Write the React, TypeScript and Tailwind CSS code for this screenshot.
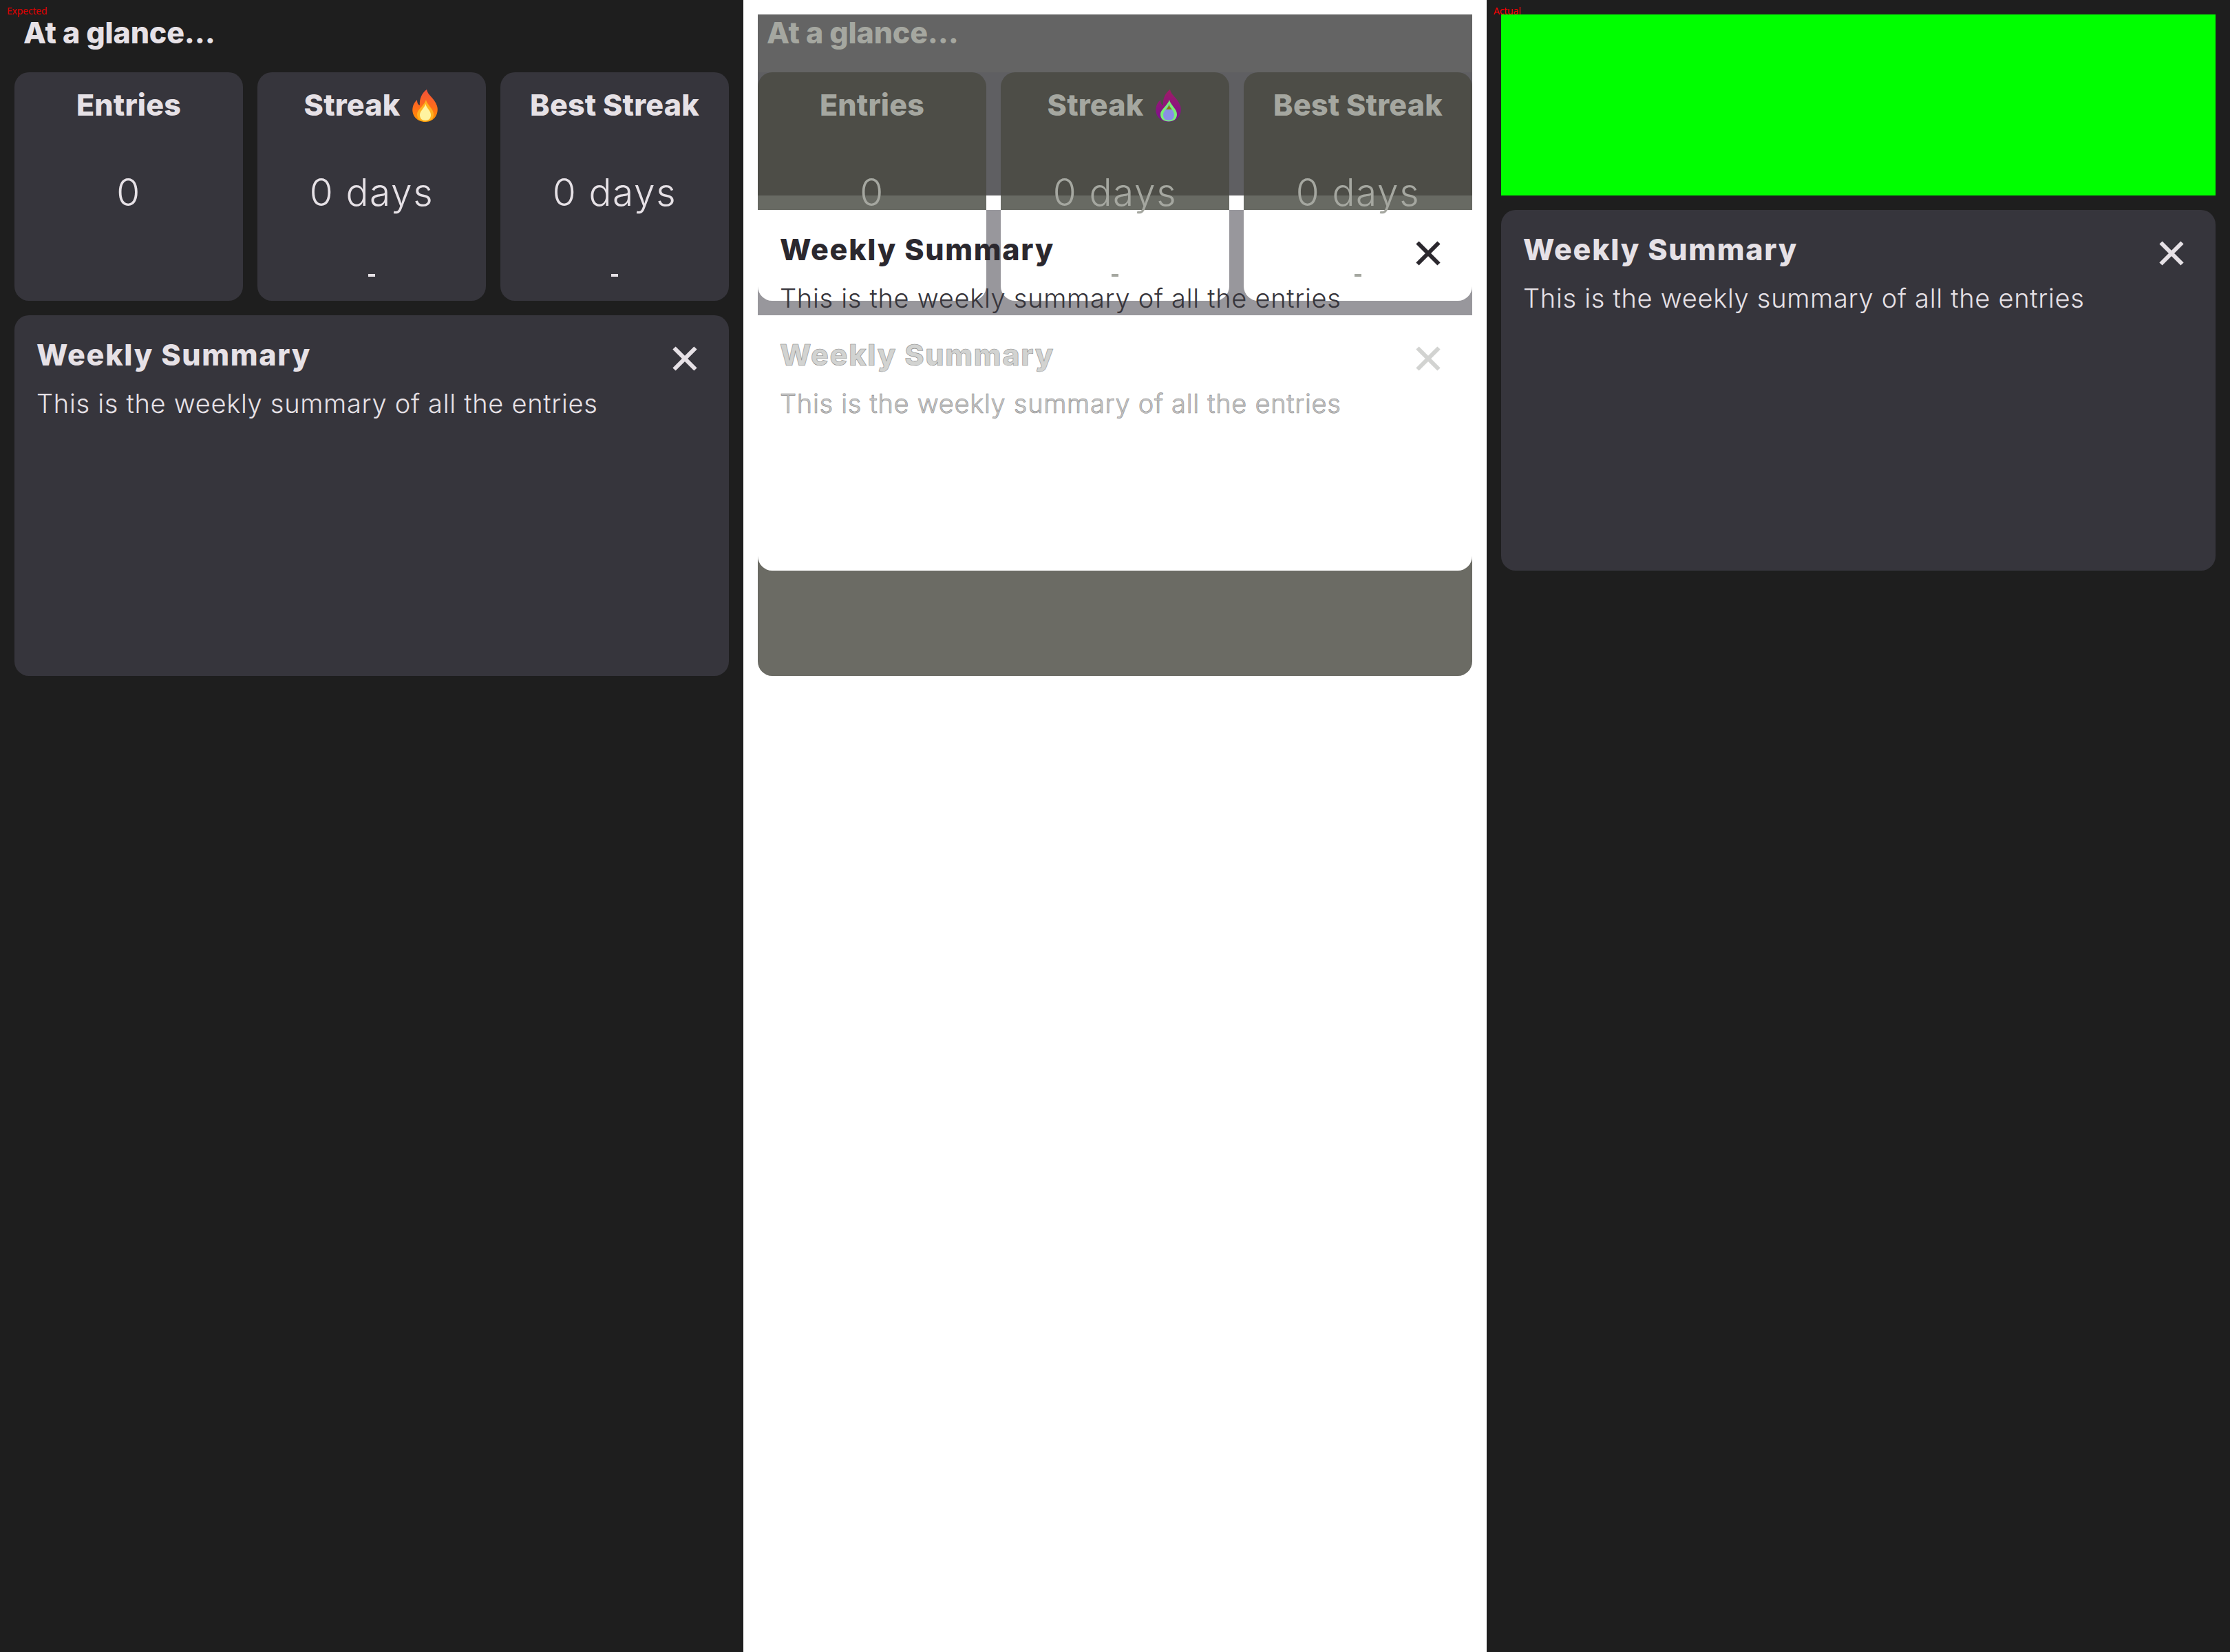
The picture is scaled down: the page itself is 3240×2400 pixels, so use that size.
import type { ReactNode } from 'react';

const sans = 'font-["Inter","Liberation_Sans",sans-serif]';

function Flame({ diff = false }: { diff?: boolean }) {
  return (
    <svg className="ml-[17px] h-[47px] w-[40px] shrink-0 translate-y-[1px]" viewBox="0 0 40 47">
      <defs>
        <linearGradient id="flame" x1="0" y1="0" x2="0" y2="1">
          <stop offset="0" stopColor="#f4513a" />
          <stop offset="0.55" stopColor="#ff6d1a" />
          <stop offset="1" stopColor="#ff9800" />
        </linearGradient>
        <linearGradient id="flameDiff" x1="0" y1="0" x2="0" y2="1">
          <stop offset="0" stopColor="#a01c66" />
          <stop offset="1" stopColor="#7a0f92" />
        </linearGradient>
      </defs>
      <path
        d="M22 0C23 8 33 12 37 24C40 34 34 47 20 47C7 47 0 37 1.5 27C2.5 21 5 18 8 15C8 19 9 22 12 23C11 14 15 5 22 0Z"
        fill={diff ? 'url(#flameDiff)' : 'url(#flame)'}
      />
      <path
        d="M21 15C22 22 32 28 32 36C32 43 27 46.5 20 46.5C13 46.5 8 43 8 36C8 29 18 24 21 15Z"
        fill={diff ? '#78f078' : '#ffb020'}
      />
      <path
        d="M20.5 21C21 27 28 30 28 37C28 42 25 45 20 45C15 45 12 42 12 37C12 31 18 28 20.5 21Z"
        fill={diff ? '#8a8fe6' : '#fff3a0'}
      />
      {diff && <path d="M20.5 21C21 25 23 27 25 29L16 29C18 27 20 25 20.5 21Z" fill="#85850c" />}
    </svg>
  );
}

function Close({ className }: { className: string }) {
  return (
    <svg className={`h-[36px] w-[36px] shrink-0 ${className}`} viewBox="0 0 36 36" stroke="currentColor" strokeWidth="6">
      <path d="M2.5 2.5L33.5 33.5M33.5 2.5L2.5 33.5" />
    </svg>
  );
}

type Tone = {
  text: string;
  card: string;
};

function StatCard({
  title,
  value,
  dash,
  tone,
  children,
}: {
  title: string;
  value: string;
  dash?: boolean;
  tone: Tone;
  children?: ReactNode;
}) {
  return (
    <div className={`flex h-[332px] flex-col items-center rounded-[21px] ${tone.card} ${tone.text}`}>
      <div className="mt-[23px] flex h-[48px] items-center">
        <span className="text-[43px] leading-[48px] font-extrabold tracking-[0.2px] whitespace-nowrap">{title}</span>
        {children}
      </div>
      <div className="mt-[70px] h-[66px] text-[55px] leading-[66px] font-light tracking-[1.6px]">{value}</div>
      {dash && <div className="mt-[86px] h-[4px] w-[10px] bg-current" />}
    </div>
  );
}

function Glance({ tone, diff = false }: { tone: Tone; diff?: boolean }) {
  return (
    <div>
      <div className="flex h-[84px] items-start">
        <h2 className={`mt-[1px] ml-[13px] text-[43px] leading-[50px] font-extrabold tracking-[-0.2px] ${tone.text}`}>
          At a glance...
        </h2>
      </div>
      <div className="grid grid-cols-[332px_332px_332px] gap-x-[21px]">
        <StatCard title="Entries" value="0" tone={tone} />
        <StatCard title="Streak" value="0 days" dash tone={tone}>
          <Flame diff={diff} />
        </StatCard>
        <StatCard title="Best Streak" value="0 days" dash tone={tone} />
      </div>
    </div>
  );
}

function Summary({
  title,
  body,
  close,
  card = '',
  stroke = '',
}: {
  title: string;
  body: string;
  close: string;
  card?: string;
  stroke?: string;
}) {
  return (
    <section className={`h-[524px] rounded-[21px] pt-[32px] pr-[33px] pl-[32px] ${card}`}>
      <div className="flex items-start justify-between">
        <h3 className={`text-[43px] leading-[50px] font-extrabold tracking-[1.7px] ${title} ${stroke}`}>Weekly Summary</h3>
        <Close className={`mt-[13px] mr-[13px] ${close}`} />
      </div>
      <p className={`mt-[23px] text-[38px] leading-[46px] font-light tracking-[0.7px] whitespace-nowrap ${body} ${stroke}`}>
        This is the weekly summary of all the entries
      </p>
    </section>
  );
}

function Expected() {
  return (
    <div className="relative h-[2400px] w-[1080px] bg-[#1e1e1e] p-[21px]">
      <span className='absolute top-[6px] left-[10px] font-["Noto_Sans",sans-serif] text-[14px] leading-[20px] tracking-[-0.2px] text-[#e00000]'>
        Expected
      </span>
      <Glance tone={{ text: 'text-[#e6e1e6]', card: 'bg-[#36353c]' }} />
      <div className="mt-[21px]">
        <Summary title="text-[#e6e1e6]" body="text-[#e6e1e6]" close="text-[#e6e1e6]" card="bg-[#36353c]" />
      </div>
    </div>
  );
}

function Diff() {
  return (
    <div className="relative h-[2400px] w-[1080px] bg-white p-[21px]">
      {/* difference bands */}
      <div>
        <div className="h-[84px] bg-[#646464]" />
        <div className="grid h-[179px] grid-cols-[332px_332px_332px] gap-x-[21px] bg-[#5f5f62]">
          <div className="rounded-t-[21px] bg-[#4d4d47]" />
          <div className="rounded-t-[21px] bg-[#4d4d47]" />
          <div className="rounded-t-[21px] bg-[#4d4d47]" />
        </div>
        <div className="grid h-[21px] grid-cols-[332px_332px_332px] gap-x-[21px] bg-white">
          <div className="bg-[#686a63]" />
          <div className="bg-[#686a63]" />
          <div className="bg-[#686a63]" />
        </div>
        <div className="grid h-[132px] grid-cols-[332px_332px_332px] gap-x-[21px] bg-[#98979c]">
          <div className="rounded-b-[21px] bg-white" />
          <div className="rounded-b-[21px] bg-white" />
          <div className="rounded-b-[21px] bg-white" />
        </div>
        <div className="h-[21px] bg-[#98979c]" />
        <div className="h-[524px] rounded-b-[21px] bg-[#6b6b64]">
          <div className="h-[371px] rounded-b-[21px] bg-white" />
        </div>
      </div>

      {/* expected layer */}
      <div className="absolute inset-[21px]">
        <Glance tone={{ text: 'text-[#a5a7a0]', card: '' }} diff />
        <div className="mt-[21px]">
          <Summary
            title="text-[#d2d3d1]"
            body="text-[#c4c4c4]"
            close="text-[#d2d3d1]"
            stroke="[-webkit-text-stroke:0.6px_#8c8c8c]"
          />
        </div>
      </div>

      {/* actual layer */}
      <div className="absolute inset-x-[21px] top-[305px]">
        <Summary title="text-[#2b282e]" body="text-[#37353b]" close="text-[#2b282e]" />
      </div>
    </div>
  );
}

function Actual() {
  return (
    <div className="relative h-[2400px] w-[1080px] bg-[#1e1e1e] p-[21px]">
      <span className='absolute top-[6px] left-[10px] font-["Noto_Sans",sans-serif] text-[14px] leading-[20px] tracking-[-0.2px] text-[#ff0000]'>
        Actual
      </span>
      <div className="h-[263px] bg-[#00ff00]" />
      <div className="mt-[21px]">
        <Summary title="text-[#e6e1e6]" body="text-[#e6e1e6]" close="text-[#e6e1e6]" card="bg-[#36353c]" />
      </div>
    </div>
  );
}

export default function App() {
  return (
    <div className={`flex h-[2400px] w-[3240px] overflow-hidden ${sans}`}>
      <Expected />
      <Diff />
      <Actual />
    </div>
  );
}
